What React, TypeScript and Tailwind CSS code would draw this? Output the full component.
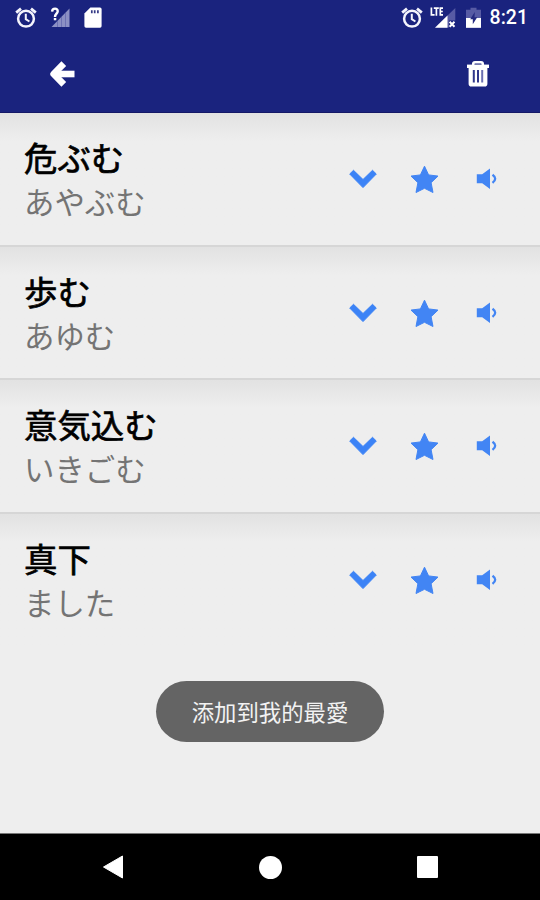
import React from "react";

const words = [
  { word: "危ぶむ", reading: "あやぶむ" },
  { word: "歩む", reading: "あゆむ" },
  { word: "意気込む", reading: "いきごむ" },
  { word: "真下", reading: "ました" },
];

function Alarm() {
  return (
    <svg width="22" height="22" viewBox="0 0 22 22" fill="none" stroke="#f4f4fc" strokeWidth="2.5">
      <circle cx="11" cy="11.7" r="7.9" />
      <path d="M1.2 5.6 6 1.6M20.8 5.6 16 1.6" strokeWidth="2.8" />
      <path d="M10.8 6.8v5.4l3.6 2.3" strokeWidth="2" />
    </svg>
  );
}

function SignalUnknown() {
  return (
    <svg className="ml-[13px]" width="20" height="22" viewBox="0 0 20 22">
      <path d="M19.5 1.5V20H1.5z" fill="#8c90c4" />
      <path d="M7.5 14v6M11.5 10v10M15.5 6v14" stroke="#6d71b3" strokeWidth="1" />
      <path d="M2.1 4.6C2.3.6 8 .8 7.7 4.4 7.5 6.6 5 7 5 10" fill="none" stroke="#fff" strokeWidth="2.4" />
      <path d="M3.8 11h2.5v2.3H3.8z" fill="#fff" />
    </svg>
  );
}

function SdCard() {
  return (
    <svg className="ml-[14px]" width="18" height="22" viewBox="0 0 18 22">
      <path d="M6.4.5H16q1.6 0 1.6 1.6v17q0 1.6-1.6 1.6H2Q.4 20.7.4 19.1V6.5z" fill="#fff" />
      <path d="M7.8 3.2v3M10.7 3.2v3M13.9 3.2v3" stroke="#343985" strokeWidth="1.7" />
    </svg>
  );
}

function LteSignal() {
  return (
    <svg className="ml-[7px]" width="26" height="22" viewBox="0 0 26 22">
      <path d="M25.3 1v12.5H19v7H5z" fill="#575ba4" />
      <path d="M17.5 8.5v12.2H5z" fill="#fff" />
      <path d="m19.6 14.8 4.9 4.9M24.5 14.8l-4.9 4.9" stroke="#fff" strokeWidth="2" />
      <path d="M1.4.4v7.5h3.2M3.8 1.2h5M6.4 1.2v7.5M13 1.2h-2.7v6.7H13M10.3 4.5h2.5" fill="none" stroke="#fff" strokeWidth="1.7" />
    </svg>
  );
}

function Battery() {
  return (
    <svg className="ml-[10px]" width="15" height="22" viewBox="0 0 15 22">
      <path d="M4.5.8h6v2H15v18H0v-18h4.500z" fill="#575ba4" />
      <path d="M0 11h15v9.800H0z" fill="#fff" />
      <path d="M8.800 5 4.200 12.200h2.600v5l4.400-7H8.500z" fill="#252a80" />
    </svg>
  );
}

function WordRow({ word, reading, last }: { word: string; reading: string; last: boolean }) {
  return (
    <li
      className={
        "flex h-[133.6px] items-start bg-linear-to-b from-[#e2e2e2] to-[#eeeeee] to-[28px] pl-6 " +
        (last ? "" : "border-b-2 border-[#d6d6d6]")
      }
    >
      <div className="w-[324px] pt-[21px]">
        <h2 className="h-[45px] text-[33.4px] leading-[46px] font-normal text-black [-webkit-text-stroke:0.7px_#000]">{word}</h2>
        <p className="text-[30.4px] leading-[44px] text-[#747474]">{reading}</p>
      </div>
      <svg className="mt-[56px] ml-px" width="28" height="20" viewBox="0 0 28 20">
        <path d="M.7 5 4.5 1.3 14 10.500 23.500 1.300 27.300 5 14 18.600z" fill="#3c83f6" stroke="#3c83f6" strokeLinejoin="round" />
      </svg>
      <svg className="mt-[52px] ml-[33px]" width="29" height="29" viewBox="0 0 29 29">
        <path
          d="m14.500 1.200 4.100 8.700 9.400 1.200-6.900 6.600 1.900 9.800-8.500-4.200-8.500 4.200 1.900-9.800L1 11.100l9.400-1.200z"
          fill="#4285f4"
          stroke="#4285f4"
          strokeLinejoin="round"
        />
      </svg>
      <svg className="mt-[55px] ml-[37px]" width="22" height="22" viewBox="0 0 22 22">
        <path d="M.8 6.200h5.400L14 .5v20.400l-7.800-5.600H.8z" fill="#4285f4" />
        <path d="M16.500 6.800q5.400 3.900 0 8" fill="none" stroke="#4285f4" strokeWidth="2.300" />
      </svg>
    </li>
  );
}

export default function App() {
  return (
    <div className="flex h-[900px] w-[540px] flex-col overflow-hidden bg-[#eeeeee] font-['Noto_Sans_CJK_JP',sans-serif]">
      <header className="h-[113px] shrink-0 border-b border-[#141866] bg-[#1a237e]">
        <div className="flex h-9 items-center pr-[12px] pl-[15px]">
          <Alarm />
          <SignalUnknown />
          <SdCard />
          <div className="ml-auto flex items-center">
            <Alarm />
            <LteSignal />
            <Battery />
            <span className="ml-[9px] font-[Roboto,sans-serif] text-[19.5px] leading-6 font-medium text-white">8:21</span>
          </div>
        </div>
        <div className="flex h-[76px] items-center justify-between pr-[51px] pl-[49px]">
          <svg width="26" height="26" viewBox="0 0 26 26" fill="none" stroke="#fff" strokeWidth="6.6" strokeLinejoin="round">
            <path d="M14.8 2.6 4.6 13l10.2 10.4" />
            <path d="M6 13h19.5" />
          </svg>
          <svg width="22" height="28" viewBox="0 0 22 28" fill="none" stroke="#fff">
            <path d="M6.200 5.500V4Q6.200 2.200 8 2.200h6q1.800 0 1.800 1.800v1.500" strokeWidth="2.500" />
            <path d="M0 6.300h22" strokeWidth="3.400" />
            <path d="M1.600 7h18.800v16.800q0 2.800-2.800 2.800H4.400q-2.800 0-2.800-2.800z" fill="#fff" stroke="none" />
            <path d="M6.800 10v12.500M11 10v12.500" stroke="#30378b" strokeWidth="2" />
            <path d="M15.200 10v12.500" stroke="#6b70b1" strokeWidth="2" />
          </svg>
        </div>
      </header>

      <main className="flex flex-1 flex-col">
        <ul>
          {words.map((item, i) => (
            <WordRow key={item.word} word={item.word} reading={item.reading} last={i === words.length - 1} />
          ))}
        </ul>
        <div className="mt-[34px] flex h-[61px] w-[228px] items-center justify-center self-center rounded-full bg-[#646464] pb-px font-['Noto_Sans_CJK_TC',sans-serif] text-[22.4px] text-[#f2f2f2]">
          添加到我的最愛
        </div>
      </main>

      <nav className="flex h-[67px] shrink-0 items-center justify-between border-t border-[#777777] bg-black pr-[102px] pl-[102px]">
        <svg width="22" height="24" viewBox="0 0 22 24">
          <path d="M20.5 1v22L1.5 12z" fill="#fff" stroke="#fff" strokeLinejoin="round" />
        </svg>
        <span className="size-[23px] rounded-full bg-white" />
        <span className="size-[21.5px] rounded-[1px] bg-white" />
      </nav>
    </div>
  );
}
